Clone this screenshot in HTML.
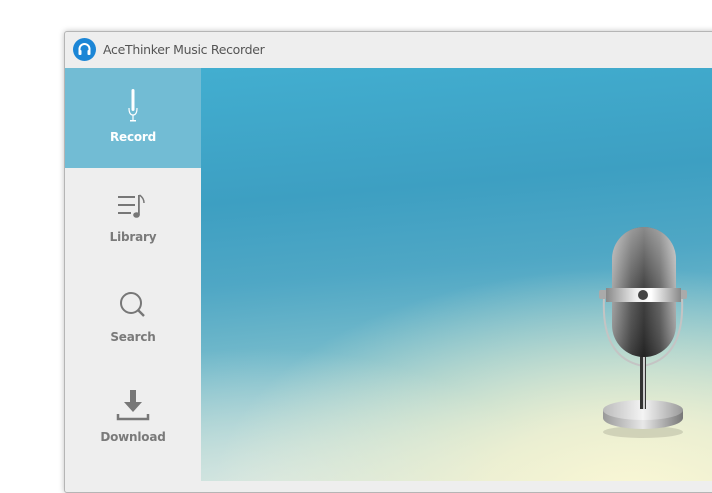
<!DOCTYPE html>
<html><head><style>
html,body{margin:0;padding:0;width:712px;height:481px;overflow:hidden;background:#fff;font-family:"DejaVu Sans","Liberation Sans",sans-serif;}
#win{position:absolute;left:64px;top:31px;width:660px;height:460px;border:1px solid #b5b5b5;border-radius:3px;background:#eeeeee;box-shadow:0 0 6px rgba(0,0,0,0.25);}
#title{position:absolute;left:38px;top:10px;font-size:12.5px;color:#555;letter-spacing:-0.3px;}
#side{position:absolute;left:65px;top:68px;width:136px;height:413px;background:#eeeeee;}
.item{position:absolute;left:0;width:136px;height:100px;text-align:center;}
.lbl{position:absolute;left:0;width:136px;top:62px;font-size:12px;font-weight:bold;color:#7a7a7a;letter-spacing:-0.2px;}
#main{position:absolute;left:201px;top:68px;width:511px;height:413px;overflow:hidden;
background:
radial-gradient(ellipse 420px 230px at 430px 430px,rgba(250,247,212,1) 0%,rgba(245,243,210,0.85) 35%,rgba(240,240,210,0) 100%),
radial-gradient(ellipse 300px 160px at 60px 440px,rgba(225,235,230,0.85) 0%,rgba(220,235,230,0) 100%),
linear-gradient(175deg,#42aed0 0%,#3d9fc2 30%,#4fa7c5 48%,#76bbcb 66%,#a4d0cf 84%,#c6dfd6 100%);}
</style></head><body>
<div id="win"><div id="title">AceThinker Music Recorder</div></div>
<svg style="position:absolute;left:73px;top:38px" width="23" height="23" viewBox="0 0 23 23">
<circle cx="11.5" cy="11.5" r="11.5" fill="#1c86d6"/>
<path d="M6.5 16 V11 A5 5 0 0 1 16.5 11 V16" fill="none" stroke="#fff" stroke-width="2"/>
<rect x="5.5" y="12" width="3" height="5" rx="1" fill="#fff"/><rect x="14.5" y="12" width="3" height="5" rx="1" fill="#fff"/>
</svg>
<div id="side">
 <div class="item" style="top:0;background:#72bcd4">
  <svg style="position:absolute;left:60px;top:20px" width="16" height="36" viewBox="0 0 16 36">
   <rect x="6.5" y="1" width="3" height="22" rx="1.5" fill="#fff"/>
   <path d="M4 20 Q4 27 8 27 Q12 27 12 20" fill="none" stroke="#fff" stroke-width="1.2"/>
   <rect x="7.4" y="27" width="1.2" height="6" fill="#fff"/><rect x="5" y="32" width="6" height="1.5" fill="#fff"/>
  </svg>
  <div class="lbl" style="color:#fff">Record</div></div>
 <div class="item" style="top:100px">
  <svg style="position:absolute;left:51px;top:25px" width="34" height="28" viewBox="0 0 34 28">
   <rect x="2" y="3" width="17" height="2" fill="#777"/><rect x="2" y="11" width="17" height="2" fill="#777"/><rect x="2" y="19" width="13" height="2" fill="#777"/>
   <rect x="22" y="2" width="1.8" height="20" fill="#777"/><ellipse cx="20.5" cy="22" rx="3.3" ry="2.8" fill="#777"/>
   <path d="M23.5 2 Q28 5 28 10" fill="none" stroke="#777" stroke-width="1.5"/>
  </svg>
  <div class="lbl">Library</div></div>
 <div class="item" style="top:200px">
  <svg style="position:absolute;left:52px;top:22px" width="32" height="32" viewBox="0 0 32 32">
   <circle cx="14" cy="13" r="10" fill="none" stroke="#777" stroke-width="2"/>
   <path d="M21 20 L27 26" stroke="#777" stroke-width="2.4"/>
  </svg>
  <div class="lbl">Search</div></div>
 <div class="item" style="top:300px">
  <svg style="position:absolute;left:50px;top:20px" width="36" height="36" viewBox="0 0 36 36">
   <rect x="15" y="2" width="6" height="14" fill="#777"/><path d="M9 14 H27 L18 24 Z" fill="#777"/>
   <path d="M3 26 V31 H33 V26" fill="none" stroke="#777" stroke-width="2.5"/>
  </svg>
  <div class="lbl">Download</div></div>
</div>
<div id="main">
 <svg style="position:absolute;left:390px;top:150px" width="110" height="230" viewBox="0 0 110 230">
  <defs>
   <linearGradient id="cap" x1="0" x2="1"><stop offset="0" stop-color="#9a9a9a"/><stop offset=".3" stop-color="#4a4a4a"/><stop offset=".5" stop-color="#2a2a2a"/><stop offset=".75" stop-color="#555"/><stop offset="1" stop-color="#aaa"/></linearGradient>
   <linearGradient id="capv" x1="0" y1="0" x2="0" y2="1"><stop offset="0" stop-color="#fff" stop-opacity=".45"/><stop offset=".5" stop-color="#fff" stop-opacity=".1"/><stop offset="1" stop-color="#000" stop-opacity=".2"/></linearGradient>
   <linearGradient id="met" x1="0" x2="1"><stop offset="0" stop-color="#888"/><stop offset=".4" stop-color="#eee"/><stop offset=".6" stop-color="#fff"/><stop offset="1" stop-color="#888"/></linearGradient>
   <linearGradient id="base" x1="0" x2="1"><stop offset="0" stop-color="#bbb"/><stop offset=".5" stop-color="#f4f4f4"/><stop offset="1" stop-color="#999"/></linearGradient>
   <linearGradient id="baseside" x1="0" x2="1"><stop offset="0" stop-color="#999"/><stop offset=".5" stop-color="#e8e8e8"/><stop offset="1" stop-color="#777"/></linearGradient>
  </defs>
  <ellipse cx="52" cy="214" rx="40" ry="6" fill="#000" opacity=".12"/>
  <path d="M13 80 Q10 140 52 148 Q94 140 91 80" fill="none" stroke="#c4c4c4" stroke-width="2"/>
  <rect x="49" y="135" width="6" height="60" fill="#333"/><rect x="52" y="135" width="2" height="60" fill="#ccc"/>
  <path d="M12 192 V200 A40 11 0 0 0 92 200 V192 Z" fill="url(#baseside)"/>
  <ellipse cx="52" cy="192" rx="40" ry="10" fill="url(#base)"/>
  <rect x="49" y="135" width="6" height="56" fill="#333"/><rect x="52" y="135" width="2" height="56" fill="#ccc"/>
  <rect x="21" y="9" width="64" height="130" rx="32" fill="url(#cap)"/>
  <rect x="21" y="9" width="64" height="130" rx="32" fill="url(#capv)"/>
  <rect x="8" y="72" width="8" height="9" rx="2" fill="#aaa"/><rect x="88" y="72" width="8" height="9" rx="2" fill="#aaa"/>
  <rect x="15" y="70" width="75" height="14" fill="url(#met)"/>
  <circle cx="52" cy="77" r="5" fill="#444"/>
 </svg>
</div>
</body></html>
